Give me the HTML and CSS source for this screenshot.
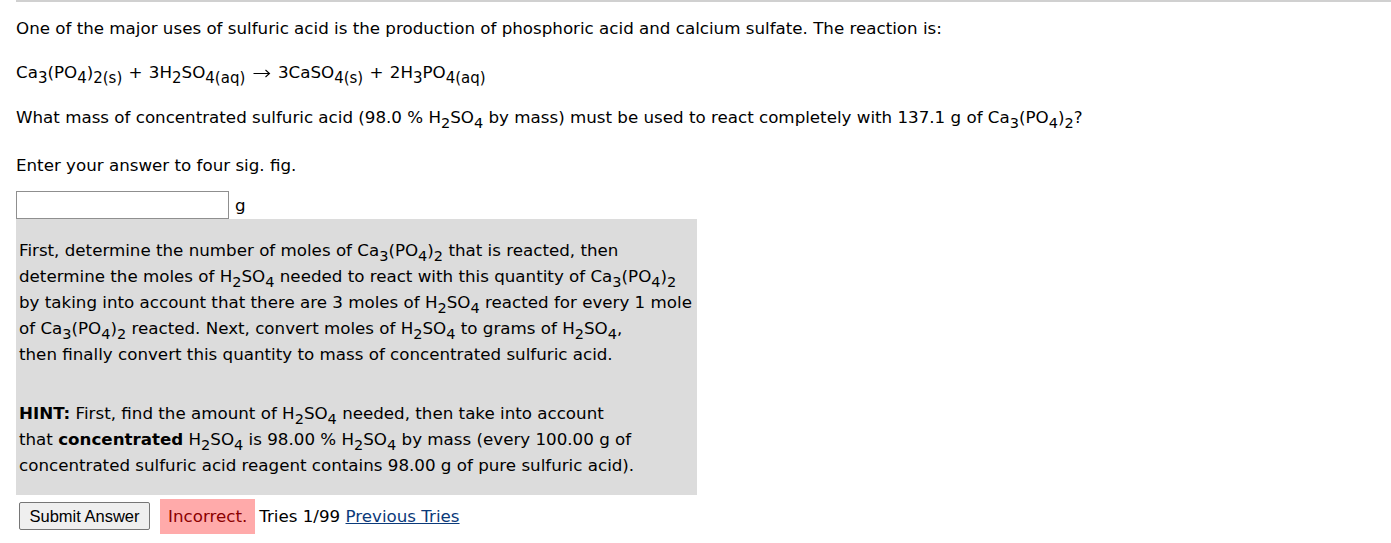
FILE: index.html
```html
<!DOCTYPE html>
<html>
<head>
<meta charset="utf-8">
<link rel="stylesheet" href="styles.css">
</head>
<body>
<div class="page">
  <p class="p1">One of the major uses of sulfuric acid is the production of phosphoric acid and calcium sulfate. The reaction is:</p>
  <p class="p2">Ca<sub>3</sub>(PO<sub>4</sub>)<sub>2(s)</sub> + 3H<sub>2</sub>SO<sub>4(aq)</sub> <svg class="arrow" width="18" height="10" viewBox="0 0 18 10" aria-label="→"><path d="M0.5 5.5H16.5M12.5 2L16.5 5.5L12.5 9" fill="none" stroke="#000" stroke-width="1.1"/></svg> 3CaSO<sub>4(s)</sub> + 2H<sub>3</sub>PO<sub>4(aq)</sub></p>
  <p class="p3">What mass of concentrated sulfuric acid (98.0 % H<sub>2</sub>SO<sub>4</sub> by mass) must be used to react completely with 137.1 g of Ca<sub>3</sub>(PO<sub>4</sub>)<sub>2</sub>?</p>
  <p class="p4">Enter your answer to four sig. fig.</p>
  <div class="answer-row"><input class="answer" type="text"><span class="unit">g</span></div>
  <div class="hintbox">
    <p class="h1">First, determine the number of moles of Ca<sub>3</sub>(PO<sub>4</sub>)<sub>2</sub> that is reacted, then<br>determine the moles of H<sub>2</sub>SO<sub>4</sub> needed to react with this quantity of Ca<sub>3</sub>(PO<sub>4</sub>)<sub>2</sub><br>by taking into account that there are 3 moles of H<sub>2</sub>SO<sub>4</sub> reacted for every 1 mole<br>of Ca<sub>3</sub>(PO<sub>4</sub>)<sub>2</sub> reacted. Next, convert moles of H<sub>2</sub>SO<sub>4</sub> to grams of H<sub>2</sub>SO<sub>4</sub>,<br>then finally convert this quantity to mass of concentrated sulfuric acid.</p>
    <p class="h2"><b>HINT:</b> First, find the amount of H<sub>2</sub>SO<sub>4</sub> needed, then take into account<br>that <b>concentrated</b> H<sub>2</sub>SO<sub>4</sub> is 98.00 % H<sub>2</sub>SO<sub>4</sub> by mass (every 100.00 g of<br>concentrated sulfuric acid reagent contains 98.00 g of pure sulfuric acid).</p>
  </div>
  <div class="submit-row">
    <button class="submit">Submit Answer</button>
    <span class="incorrect">Incorrect.</span>
    <span class="tries">Tries 1/99 <a href="#" class="prev">Previous Tries</a></span>
  </div>
</div>
</body>
</html>
```
FILE: styles.css
```css
html, body {
  margin: 0;
  padding: 0;
  background: #fff;
}
body {
  font-family: "DejaVu Sans", Verdana, sans-serif;
  font-size: 16.7px;
  color: #000;
}
.page {
  margin-left: 16px;
  border-top: 2px solid #d0d0d0;
}
p {
  margin: 0;
  line-height: 26px;
}
sub {
  font-size: 14.5px;
  vertical-align: -5px;
  line-height: 0;
}
.p2 {
  word-spacing: 1px;
}
.p2 sub {
  font-size: 15px;
}
.arrow {
  vertical-align: 0;
  margin: 0 1px;
}
.p1 { margin-top: 13px; }
.p2 { margin-top: 18px; }
.p3 { margin-top: 19px; }
.p4 { margin-top: 22px; }
.answer-row {
  margin-top: 13px;
  display: flex;
  align-items: center;
  height: 28px;
}
.answer {
  width: 213px;
  height: 28px;
  box-sizing: border-box;
  border: 1px solid #8f8f8f;
  margin: 0;
  padding: 0;
}
.unit {
  margin-left: 6px;
}
.hintbox {
  width: 681px;
  box-sizing: border-box;
  background: #dcdcdc;
  padding: 18px 3px 17px 3px;
}
.h2 { margin-top: 33px; }
.submit-row {
  display: flex;
  align-items: center;
  height: 42px;
}
.submit {
  margin-left: 3px;
  width: 131px;
  height: 28px;
  font-family: "Liberation Sans", Arial, sans-serif;
  font-size: 16.5px;
  background: #efefef;
  border: 1px solid #767676;
  border-radius: 2px;
  padding: 0;
  color: #000;
}
.incorrect {
  margin-left: 10px;
  background: #ffaaaa;
  color: #8b0000;
  padding: 0 8px;
  height: 35px;
  line-height: 35px;
}
.tries {
  margin-left: 4px;
}
.prev {
  color: #0b3a7a;
  text-decoration: underline;
}
```
